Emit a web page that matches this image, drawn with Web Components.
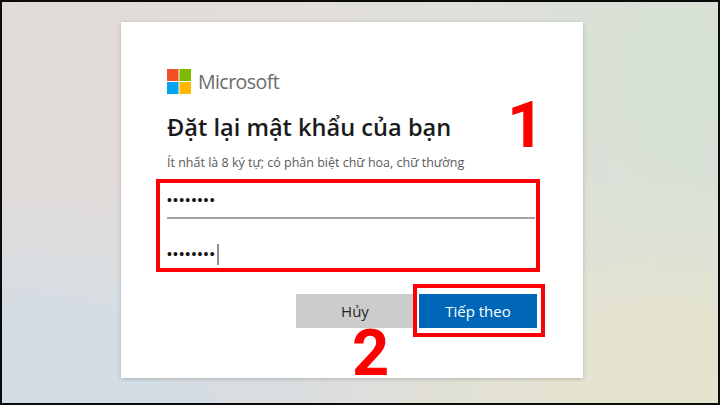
<!DOCTYPE html>
<html lang="vi">
<head>
<meta charset="utf-8">
<title>Đặt lại mật khẩu</title>
<style>
  html, body { margin: 0; padding: 0; width: 720px; height: 405px; overflow: hidden; background: #000; }
</style>
</head>
<body>
<reset-screen>
  <reset-card>
    <ms-logo></ms-logo>
    <h-title>Đặt lại mật khẩu của bạn</h-title>
    <h-hint>Ít nhất là 8 ký tự; có phân biệt chữ hoa, chữ thường</h-hint>
    <pw-field underline>••••••••</pw-field>
    <pw-field caret>••••••••</pw-field>
    <form-actions>
      <action-button>Hủy</action-button>
      <action-button primary>Tiếp theo</action-button>
    </form-actions>
    <red-box style="left:35px;top:157px;width:376px;height:85px"></red-box>
    <red-box style="left:292px;top:262px;width:124px;height:45px"></red-box>
    <red-num style="left:386px;top:80px">1</red-num>
    <red-num style="left:231px;top:308px">2</red-num>
  </reset-card>
</reset-screen>

<script>
class ResetScreen extends HTMLElement {
    constructor() {
        super();
        this.attachShadow({ mode: 'open' });
        this.shadowRoot.innerHTML = `
            <style>
                :host { display: flex; box-sizing: border-box; width: 720px; height: 405px; padding: 2px; background: #0b0b0b; }
                .bg {
                    flex: 1; display: flex; align-items: flex-start; justify-content: flex-start; padding: 20px 0 0 119px;
                    background:
                        radial-gradient(ellipse 420px 230px at 0% 100%, #d1dce5 0%, #d3dde4 35%, rgba(211,221,228,0) 100%),
                        radial-gradient(ellipse 280px 240px at 100% 18%, #d4e1d3 0%, rgba(212,225,211,0) 100%),
                        radial-gradient(ellipse 360px 230px at 100% 100%, #e6e3cf 0%, #e4e3d0 40%, rgba(228,227,208,0) 100%),
                        linear-gradient(90deg, #e2dbd8 0%, #e0dedb 55%, #dfe2da 100%);
                }
            </style>
            <div class="bg"><slot></slot></div>
        `;
    }
}

class ResetCard extends HTMLElement {
    constructor() {
        super();
        this.attachShadow({ mode: 'open' });
        this.shadowRoot.innerHTML = `
            <style>
                :host {
                    display: flex; flex-direction: column; position: relative; box-sizing: border-box;
                    width: 462px; height: 356px; padding: 47px 46px 0; background: #fff;
                    box-shadow: 0 1px 4px rgba(0,0,0,.2);
                    font-family: "Open Sans", "Noto Sans", sans-serif;
                }
            </style>
            <slot></slot>
        `;
    }
}

class MsLogo extends HTMLElement {
    constructor() {
        super();
        this.attachShadow({ mode: 'open' });
        this.shadowRoot.innerHTML = `
            <style>
                :host { display: flex; align-items: center; gap: 7px; height: 25px; }
                .text { font: 500 19.6px/25px "Open Sans", sans-serif; color: #6b6b6b; letter-spacing: -.6px; }
                svg { display: block; }
            </style>
            <svg width="24" height="25" viewBox="0 0 24 25">
                <rect width="11.5" height="12" fill="#f25022"/>
                <rect x="12.5" width="11.5" height="12" fill="#7fba00"/>
                <rect y="13" width="11.5" height="12" fill="#00a4ef"/>
                <rect x="12.5" y="13" width="11.5" height="12" fill="#ffb900"/>
            </svg>
            <span class="text">Microsoft</span>
        `;
    }
}

class HTitle extends HTMLElement {
    constructor() {
        super();
        this.attachShadow({ mode: 'open' });
        this.shadowRoot.innerHTML = `
            <style>
                :host { display: block; margin-top: 16px; font: 600 23.6px/34px "Open Sans", sans-serif; color: #1b1b1b; white-space: nowrap; }
            </style>
            <slot></slot>
        `;
    }
}

class HHint extends HTMLElement {
    constructor() {
        super();
        this.attachShadow({ mode: 'open' });
        this.shadowRoot.innerHTML = `
            <style>
                :host { display: block; margin-top: 11px; font: 400 12.5px/16px "Open Sans", sans-serif; color: #5a5a5a; white-space: nowrap; }
            </style>
            <slot></slot>
        `;
    }
}

class PwField extends HTMLElement {
    constructor() {
        super();
        this.attachShadow({ mode: 'open' });
        this.shadowRoot.innerHTML = `
            <style>
                :host { display: block; box-sizing: border-box; width: 368px; height: 48px; padding-top: 23px; }
                :host([underline]) { height: 36px; padding-top: 5px; margin-top: 12px; border-bottom: 2px solid #a3a3a3; }
                .val { display: inline-flex; align-items: center; height: 24px; font: 400 14px/24px "Liberation Sans", sans-serif; letter-spacing: 1.2px; color: #111; }
                .caret { display: none; width: 2px; height: 21px; margin-left: 1px; background: #8e8e8e; }
                :host([caret]) .caret { display: block; }
            </style>
            <span class="val"><slot></slot><span class="caret"></span></span>
        `;
    }
}

class FormActions extends HTMLElement {
    constructor() {
        super();
        this.attachShadow({ mode: 'open' });
        this.shadowRoot.innerHTML = `
            <style>
                :host { display: flex; justify-content: flex-end; gap: 5px; width: 370px; margin-top: 27px; }
            </style>
            <slot></slot>
        `;
    }
}

class ActionButton extends HTMLElement {
    constructor() {
        super();
        this.attachShadow({ mode: 'open' });
        this.shadowRoot.innerHTML = `
            <style>
                :host {
                    display: flex; align-items: center; justify-content: center; box-sizing: border-box;
                    width: 118px; height: 34px; background: #cccccc; color: #262626;
                    font: 400 15px/20px "Open Sans", sans-serif;
                }
                :host([primary]) { background: #0067b8; color: #fff; }
            </style>
            <slot></slot>
        `;
    }
}

// annotations drawn over the screenshot
class RedBox extends HTMLElement {
    constructor() {
        super();
        this.attachShadow({ mode: 'open' });
        this.shadowRoot.innerHTML = `
            <style>
                :host { display: block; position: absolute; border: 4px solid #fb0006; pointer-events: none; }
            </style>
        `;
    }
}

class RedNum extends HTMLElement {
    constructor() {
        super();
        this.attachShadow({ mode: 'open' });
        this.shadowRoot.innerHTML = `
            <style>
                :host { display: block; position: absolute; font: 700 65px/46px Roboto, "Liberation Sans", sans-serif; color: #fd0000; }
            </style>
            <slot></slot>
        `;
    }
}

customElements.define('reset-screen', ResetScreen);
customElements.define('reset-card', ResetCard);
customElements.define('ms-logo', MsLogo);
customElements.define('h-title', HTitle);
customElements.define('h-hint', HHint);
customElements.define('pw-field', PwField);
customElements.define('form-actions', FormActions);
customElements.define('action-button', ActionButton);
customElements.define('red-box', RedBox);
customElements.define('red-num', RedNum);
</script>
</body>
</html>
